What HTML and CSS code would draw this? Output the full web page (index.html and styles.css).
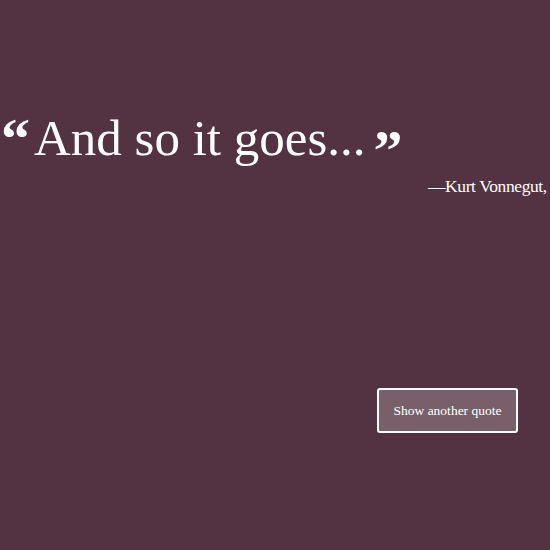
FILE: index.html
```html
<!DOCTYPE html>
<html>
<head>
<meta charset="utf-8">
<link rel="stylesheet" href="styles.css">
</head>
<body>
<main class="box">
  <blockquote class="quote">
    <span class="mark open">&ldquo;</span>
    <span class="text">And so it goes...</span>
    <span class="mark close">&rdquo;</span>
  </blockquote>
  <p class="author">&mdash;Kurt Vonnegut,</p>
  <div class="actions">
    <button class="btn">Show another quote</button>
  </div>
</main>
</body>
</html>
```
FILE: styles.css
```css
html, body {
  margin: 0;
  height: 100%;
  overflow: hidden;
}
body {
  background: #533241;
  color: #ffffff;
  font-family: "Liberation Serif", "Times New Roman", serif;
}
.box {
  width: 550px;
}
.quote {
  margin: 0;
  padding: 103px 0 0 1px;
  height: 70px;
  display: flex;
  align-items: flex-start;
  white-space: nowrap;
}
.text {
  font-size: 51px;
  line-height: 70px;
  margin: 0 8px 0 4px;
}
.mark {
  font-weight: bold;
  font-size: 58px;
  line-height: 40px;
}
.open { margin-top: 16px; }
.close { margin-top: 28px; }
.author {
  margin: 1px 0 0 428px;
  font-size: 17.5px;
  letter-spacing: -0.4px;
  line-height: 24px;
  white-space: nowrap;
}
.actions {
  display: flex;
  justify-content: flex-start;
  padding: 190px 0 0 377px;
}
.btn {
  width: 141px;
  height: 45px;
  background: rgba(255,255,255,0.22);
  border: 2px solid #ffffff;
  border-radius: 3px;
  color: #ffffff;
  font-family: "Liberation Serif", "Times New Roman", serif;
  font-size: 13.5px;
  padding: 0;
}
```
